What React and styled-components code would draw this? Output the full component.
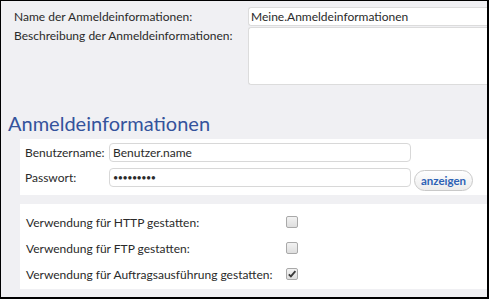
import React from 'react';
import styled, { createGlobalStyle } from 'styled-components';

const GlobalStyle = createGlobalStyle`
  html, body {
    margin: 0;
    padding: 0;
    background: #ffffff;
  }
  * {
    box-sizing: border-box;
  }
`;

const App = () => {
  return (
    <>
      <GlobalStyle />
      <Frame>
        <TopGrid>
          <Label>Name der Anmeldeinformationen:</Label>
          <TextInput>Meine.Anmeldeinformationen</TextInput>
          <Label top>Beschreibung der Anmeldeinformationen:</Label>
          <TextArea />
        </TopGrid>
        <Heading>Anmeldeinformationen</Heading>
        <Panel>
          <CredRow>
            <CredLabel>Benutzername:</CredLabel>
            <CredInput>Benutzer.name</CredInput>
          </CredRow>
          <CredRow>
            <CredLabel>Passwort:</CredLabel>
            <CredInput password>•••••••••</CredInput>
            <ShowButton>anzeigen</ShowButton>
          </CredRow>
        </Panel>
        <Panel options>
          <OptionRow>
            <OptionLabel>Verwendung für HTTP gestatten:</OptionLabel>
            <Checkbox />
          </OptionRow>
          <OptionRow>
            <OptionLabel>Verwendung für FTP gestatten:</OptionLabel>
            <Checkbox />
          </OptionRow>
          <OptionRow>
            <OptionLabel>Verwendung für Auftragsausführung gestatten:</OptionLabel>
            <Checkbox checked>
              <svg width="10" height="10" viewBox="0 0 10 10">
                <path d="M1.8 5.4 L3.9 7.4 L8.4 2.2" fill="none" stroke="#3a3a3a" strokeWidth="1.8" />
              </svg>
            </Checkbox>
          </OptionRow>
        </Panel>
      </Frame>
    </>
  );
};

const Frame = styled.div`
  width: 489px;
  height: 299px;
  border-style: solid;
  border-color: #000;
  border-width: 1px 2px 2px 1px;
  background: #f0f0f3;
  font-family: Lato, "Open Sans", sans-serif;
  font-size: 12px;
  color: #2a2a2a;
  display: flex;
  flex-direction: column;
  overflow: hidden;
`;

const TopGrid = styled.div`
  display: grid;
  grid-template-columns: 234px 1fr;
  grid-template-rows: 19px 58px;
  row-gap: 1px;
  padding: 6px 0 0 13px;
`;

const Label = styled.div`
  display: flex;
  align-items: ${p => (p.top ? 'flex-start' : 'center')};
  padding-top: ${p => (p.top ? '1px' : '0')};
  white-space: nowrap;
`;

const TextInput = styled.div`
  background: #fff;
  border: 1px solid #dcdcdc;
  border-right: none;
  border-radius: 3px 0 0 3px;
  padding: 0 2px;
  display: flex;
  align-items: center;
  font-size: 12px;
`;

const TextArea = styled.div`
  background: #fff;
  border: 1px solid #dcdcdc;
  border-right: none;
  border-radius: 3px 0 0 3px;
`;

const Heading = styled.div`
  font-size: 20px;
  color: #34539c;
  padding: 24px 0 0 7px;
  line-height: 28px;
  height: 54px;
  white-space: nowrap;
`;

const Panel = styled.div`
  margin-left: 19px;
  background: #fff;
  display: flex;
  flex-direction: column;
  gap: ${p => (p.options ? '0' : '6px')};
  padding: ${p => (p.options ? '5px 0 2px 6px' : '4px 0 8px 5px')};
  margin-top: ${p => (p.options ? '9px' : '0')};
`;

const CredRow = styled.div`
  display: flex;
  align-items: center;
  height: 19px;
`;

const CredLabel = styled.div`
  width: 84px;
  white-space: nowrap;
`;

const CredInput = styled.div`
  width: 302px;
  height: 19px;
  background: #fff;
  border: 1px solid #d8d8d8;
  border-radius: 4px;
  padding: 0 3px;
  display: flex;
  align-items: center;
  font-size: ${p => (p.password ? '9px' : '12px')};
  letter-spacing: ${p => (p.password ? '-0.5px' : '0')};
`;

const ShowButton = styled.div`
  margin: 5px 0 0 3px;
  width: 59px;
  height: 21px;
  border: 1px solid #c9c9c9;
  border-radius: 11px;
  background: linear-gradient(#ffffff, #ececec);
  color: #2d62b5;
  font-weight: bold;
  font-size: 11.5px;
  display: flex;
  align-items: center;
  justify-content: center;
`;

const OptionRow = styled.div`
  display: flex;
  align-items: center;
  height: 26px;
`;

const OptionLabel = styled.div`
  width: 260px;
  white-space: nowrap;
`;

const Checkbox = styled.div`
  width: 12px;
  height: 12px;
  border: 1px solid #a9a9a9;
  border-radius: 2px;
  background: linear-gradient(#f2f2f2, #dedede);
  display: flex;
  align-items: center;
  justify-content: center;
`;

export default App;
